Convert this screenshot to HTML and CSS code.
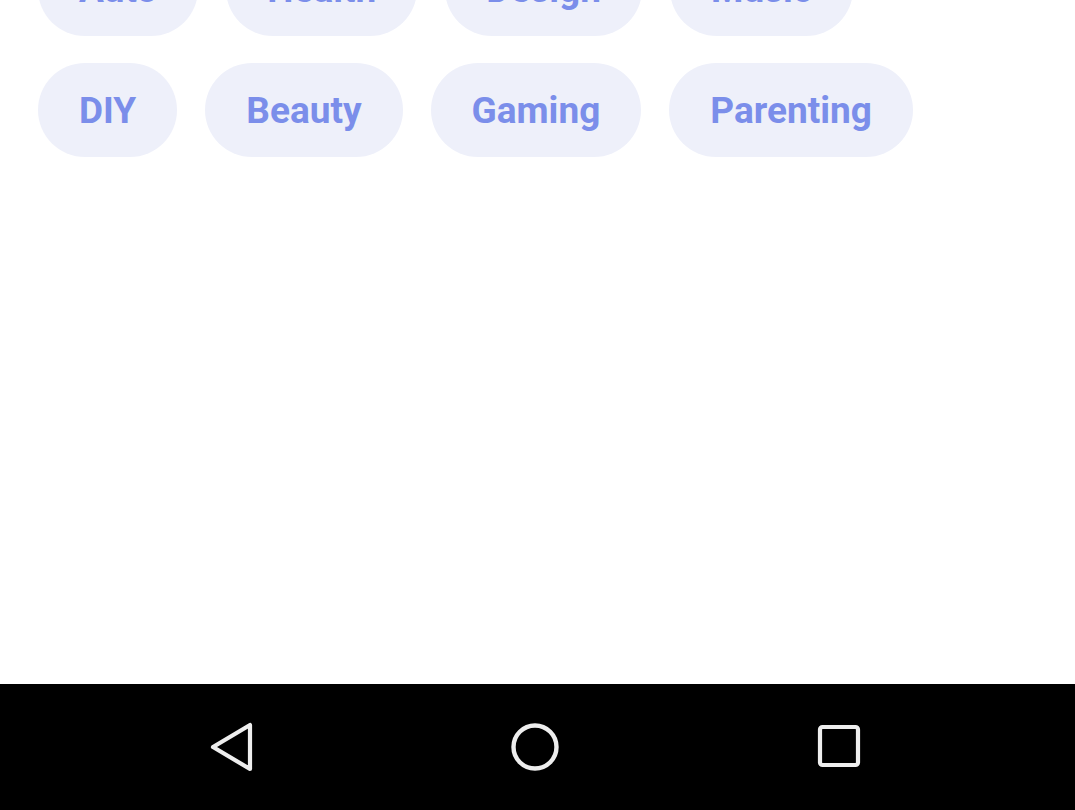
FILE: index.html
```html
<!DOCTYPE html>
<html>
<head>
<meta charset="utf-8">
<link rel="stylesheet" href="styles.css">
</head>
<body>
<div class="screen">
  <main class="content">
    <div class="chips">
      <span class="chip">Auto</span>
      <span class="chip">Health</span>
      <span class="chip">Design</span>
      <span class="chip">Music</span>
      <span class="chip">DIY</span>
      <span class="chip">Beauty</span>
      <span class="chip">Gaming</span>
      <span class="chip">Parenting</span>
    </div>
  </main>
  <nav class="navbar">
    <svg class="nav-icon" width="60" height="60" viewBox="0 0 60 60">
      <path d="M50 8 L50 52 L13 30 Z" fill="none" stroke="#eeeeee" stroke-width="4.2" stroke-linejoin="round"/>
    </svg>
    <svg class="nav-icon" width="60" height="60" viewBox="0 0 60 60">
      <circle cx="30" cy="30" r="21.5" fill="none" stroke="#eeeeee" stroke-width="4.4"/>
    </svg>
    <svg class="nav-icon" width="60" height="60" viewBox="0 0 60 60">
      <rect x="10" y="10" width="38" height="38" rx="2.5" fill="none" stroke="#eeeeee" stroke-width="4.2"/>
    </svg>
  </nav>
</div>
</body>
</html>
```

FILE: styles.css
```css
html, body {
  margin: 0;
  padding: 0;
  background: #ffffff;
}

.screen {
  width: 1075px;
  height: 810px;
  display: flex;
  flex-direction: column;
  overflow: hidden;
}

.content {
  height: 684px;
  overflow: hidden;
  background: #ffffff;
}

.chips {
  display: flex;
  flex-wrap: wrap;
  column-gap: 28px;
  row-gap: 27px;
  margin-top: -58px;
  padding: 0 38px;
  width: 900px;
}

.chip {
  display: inline-flex;
  align-items: center;
  justify-content: center;
  height: 94px;
  padding: 0 41px;
  border-radius: 47px;
  background: #eef0fa;
  color: #7b8eea;
  font-family: Roboto, "Liberation Sans", sans-serif;
  font-weight: 700;
  font-size: 37px;
  line-height: 1;
  box-sizing: border-box;
}

.navbar {
  height: 126px;
  background: #000000;
  display: flex;
  align-items: center;
  justify-content: flex-start;
  gap: 245px;
  padding: 0 0 0 200px;
}

.nav-icon {
  display: block;
}
```
